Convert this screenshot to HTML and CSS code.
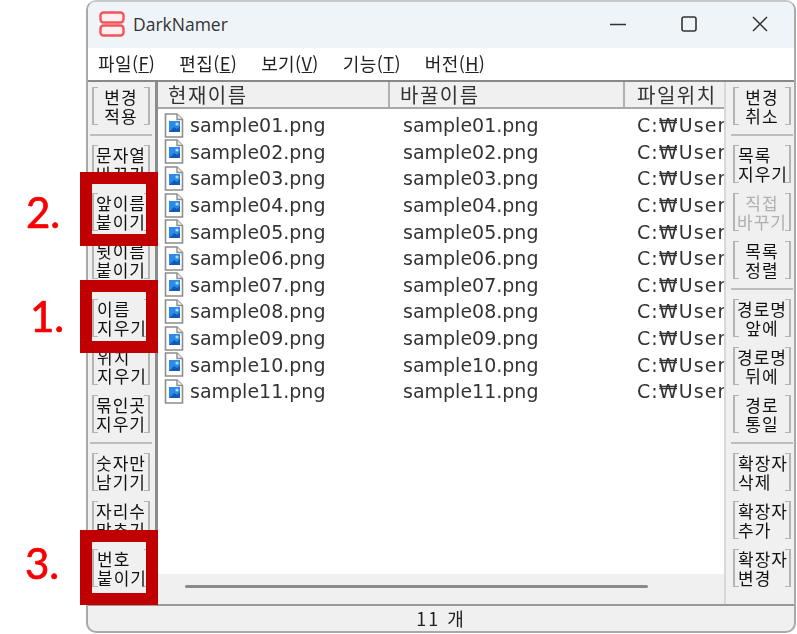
FILE: index.html
```html
<!DOCTYPE html>
<html lang="ko">
<head>
    <meta charset="UTF-8">
    <meta name="viewport" content="width=device-width, initial-scale=1.0">
    <title>DarkNamer</title>
    <link rel="stylesheet" href="styles.css">
</head>
<body>
    <svg class="defs" width="0" height="0">
        <symbol id="fileIcon" viewBox="0 0 20 25">
            <path d="M1.5 1h11.5l5.5 5.5v17.5h-17z" fill="#fff" stroke="#8d8d8d" stroke-width="1.6"/>
            <path d="M13 1v5.5h5.5" fill="#eee" stroke="#8d8d8d" stroke-width="1.4"/>
            <rect x="5" y="8" width="11" height="11" fill="#2a8be8"/>
            <path d="M5 19l5-5 3 2 3-3v6z" fill="#1259b8"/>
            <circle cx="13" cy="11" r="1.6" fill="#a9dbf9"/>
        </symbol>
    </svg>

    <div class="window">
        <div class="titlebar">
            <svg class="app-icon" width="26" height="26" viewBox="0 0 26 26">
                <rect x="1.5" y="1.5" width="23" height="10" rx="3" fill="#fff0f0" stroke="#f4535a" stroke-width="2.4"/>
                <rect x="1.5" y="14.5" width="23" height="10" rx="3" fill="#fff0f0" stroke="#f4535a" stroke-width="2.4"/>
            </svg>
            <span class="app-name">DarkNamer</span>
            <div class="win-controls">
                <svg width="16" height="16" viewBox="0 0 16 16"><path d="M0 8.5h16" stroke="#333" stroke-width="1.6"/></svg>
                <svg width="16" height="16" viewBox="0 0 16 16"><rect x="1" y="1" width="14" height="14" rx="2" fill="none" stroke="#333" stroke-width="1.6"/></svg>
                <svg width="16" height="16" viewBox="0 0 16 16"><path d="M1 1l14 14M15 1L1 15" stroke="#333" stroke-width="1.5"/></svg>
            </div>
        </div>

        <div class="menubar">
            <span>파일(<u>F</u>)</span>
            <span>편집(<u>E</u>)</span>
            <span>보기(<u>V</u>)</span>
            <span>기능(<u>T</u>)</span>
            <span>버전(<u>H</u>)</span>
        </div>

        <div class="workspace">
            <div class="panel panel-left">
                <button class="tool-btn">변경<br>적용</button>
                <div class="sep"></div>
                <button class="tool-btn">문자열<br>바꾸기</button>
                <button class="tool-btn">앞이름<br>붙이기</button>
                <button class="tool-btn">뒷이름<br>붙이기</button>
                <div class="sep"></div>
                <button class="tool-btn align-left">이름<br>지우기</button>
                <button class="tool-btn align-left">위치<br>지우기</button>
                <button class="tool-btn">묶인곳<br>지우기</button>
                <div class="sep"></div>
                <button class="tool-btn">숫자만<br>남기기</button>
                <button class="tool-btn">자리수<br>맞추기</button>
                <button class="tool-btn align-left">번호<br>붙이기</button>
            </div>

            <div class="file-list">
                <div class="list-head">
                    <div class="head-cell">현재이름</div>
                    <div class="head-cell">바꿀이름</div>
                    <div class="head-cell">파일위치</div>
                </div>
                <div class="list-body">
                    <div class="row"><span class="name"><svg class="file-icon"><use href="#fileIcon"/></svg>sample01.png</span><span>sample01.png</span><span class="path">C:₩User</span></div>
                    <div class="row"><span class="name"><svg class="file-icon"><use href="#fileIcon"/></svg>sample02.png</span><span>sample02.png</span><span class="path">C:₩User</span></div>
                    <div class="row"><span class="name"><svg class="file-icon"><use href="#fileIcon"/></svg>sample03.png</span><span>sample03.png</span><span class="path">C:₩User</span></div>
                    <div class="row"><span class="name"><svg class="file-icon"><use href="#fileIcon"/></svg>sample04.png</span><span>sample04.png</span><span class="path">C:₩User</span></div>
                    <div class="row"><span class="name"><svg class="file-icon"><use href="#fileIcon"/></svg>sample05.png</span><span>sample05.png</span><span class="path">C:₩User</span></div>
                    <div class="row"><span class="name"><svg class="file-icon"><use href="#fileIcon"/></svg>sample06.png</span><span>sample06.png</span><span class="path">C:₩User</span></div>
                    <div class="row"><span class="name"><svg class="file-icon"><use href="#fileIcon"/></svg>sample07.png</span><span>sample07.png</span><span class="path">C:₩User</span></div>
                    <div class="row"><span class="name"><svg class="file-icon"><use href="#fileIcon"/></svg>sample08.png</span><span>sample08.png</span><span class="path">C:₩User</span></div>
                    <div class="row"><span class="name"><svg class="file-icon"><use href="#fileIcon"/></svg>sample09.png</span><span>sample09.png</span><span class="path">C:₩User</span></div>
                    <div class="row"><span class="name"><svg class="file-icon"><use href="#fileIcon"/></svg>sample10.png</span><span>sample10.png</span><span class="path">C:₩User</span></div>
                    <div class="row"><span class="name"><svg class="file-icon"><use href="#fileIcon"/></svg>sample11.png</span><span>sample11.png</span><span class="path">C:₩User</span></div>
                </div>
                <div class="scrollbar"><div class="scroll-thumb"></div></div>
            </div>

            <div class="panel panel-right">
                <button class="tool-btn">변경<br>취소</button>
                <div class="sep"></div>
                <button class="tool-btn align-left">목록<br>지우기</button>
                <button class="tool-btn disabled">직접<br>바꾸기</button>
                <button class="tool-btn">목록<br>정렬</button>
                <div class="sep"></div>
                <button class="tool-btn">경로명<br>앞에</button>
                <button class="tool-btn">경로명<br>뒤에</button>
                <button class="tool-btn">경로<br>통일</button>
                <div class="sep"></div>
                <button class="tool-btn align-left">확장자<br>삭제</button>
                <button class="tool-btn align-left">확장자<br>추가</button>
                <button class="tool-btn align-left">확장자<br>변경</button>
            </div>
        </div>

        <div class="statusbar">11 개</div>
    </div>

    <!-- annotations on top of the screenshot -->
    <div class="mark mark-2"></div>
    <div class="mark mark-1"></div>
    <div class="mark mark-3"></div>
    <div class="step step-2">2.</div>
    <div class="step step-1">1.</div>
    <div class="step step-3">3.</div>
</body>
</html>
```

FILE: styles.css
```css
html, body {
    margin: 0;
    height: 634px;
    overflow: hidden;
    background: white;
}
body {
    position: relative;
    font-family: "Noto Sans CJK KR", "Noto Sans", sans-serif;
    color: #222;
}
.defs {
    display: block;
    height: 0;
}
.window {
    box-sizing: border-box;
    width: 710px;
    height: 633px;
    margin-left: 86px;
    display: flex;
    flex-direction: column;
    border: 2px solid #a9a9a9;
    border-top-color: #c8c8c8;
    border-radius: 10px;
    overflow: hidden;
    background: #f0f0f0;
    filter: blur(0.4px);
}
.titlebar {
    flex: none;
    box-sizing: border-box;
    height: 46px;
    display: flex;
    align-items: center;
    padding: 0 0 2px 11px;
    background: #eff4f9;
}
.app-icon {
    margin-right: 8px;
}
.app-name {
    font-family: "Open Sans", sans-serif;
    font-size: 17.5px;
    color: #333;
}
.win-controls {
    margin-left: auto;
    margin-right: 26px;
    display: flex;
    gap: 55px;
}
.menubar {
    flex: none;
    box-sizing: border-box;
    height: 32px;
    display: flex;
    align-items: center;
    gap: 24px;
    padding: 0 0 3px 10px;
    background: white;
    font-size: 18px;
    letter-spacing: 0.4px;
    color: #222;
}
.workspace {
    flex: 1;
    min-height: 0;
    display: flex;
    border-top: 2px solid #888;
    border-bottom: 2px solid #999;
}
.panel {
    flex: none;
    box-sizing: border-box;
    display: flex;
    flex-direction: column;
    gap: 10px;
    padding-top: 5px;
    background: #f0f0f0;
}
.panel-left {
    width: 70px;
    padding-left: 4px;
    border-right: 3px solid #8c8c8c;
}
.panel-right {
    width: 70px;
    padding-left: 7px;
    border-left: 2px solid #d8d8d8;
}
.tool-btn {
    flex: none;
    box-sizing: border-box;
    width: 58px;
    height: 38px;
    padding: 0;
    border: solid #b4b4b4;
    border-width: 0 2px;
    background:
        linear-gradient(#b4b4b4, #b4b4b4) left top / 4px 1px no-repeat,
        linear-gradient(#b4b4b4, #b4b4b4) right top / 4px 1px no-repeat,
        linear-gradient(#b4b4b4, #b4b4b4) left bottom / 4px 1px no-repeat,
        linear-gradient(#b4b4b4, #b4b4b4) right bottom / 4px 1px no-repeat;
    font-family: inherit;
    font-size: 17px;
    line-height: 19px;
    letter-spacing: 1px;
    color: #111;
    white-space: nowrap;
}
.tool-btn.align-left {
    text-align: left;
    padding-left: 3px;
}
.tool-btn.disabled {
    color: #b0b0b0;
}
.sep {
    flex: none;
    height: 2px;
    width: 62px;
    margin: -1px 0 -1px -2px;
    background: #bdbdbd;
}
.file-list {
    flex: 1;
    min-width: 0;
    display: flex;
    flex-direction: column;
    background: white;
}
.list-head {
    flex: none;
    height: 25px;
    display: grid;
    grid-template-columns: 232px 235px 1fr;
    background: #f0f0f0;
    border-bottom: 2px solid #a8a8a8;
    font-size: 20px;
    line-height: 25px;
    letter-spacing: 1.5px;
}
.head-cell {
    padding-left: 10px;
    border-right: 2px solid #b0b0b0;
    box-sizing: border-box;
    color: #333;
    white-space: nowrap;
}
.head-cell:last-child {
    border-right: none;
    padding-left: 12px;
}
.list-body {
    flex: 1;
    min-height: 0;
    padding-top: 3px;
    font-family: "DejaVu Sans", sans-serif;
    font-size: 19px;
    color: #333;
}
.row {
    height: 26.6px;
    display: grid;
    grid-template-columns: 245px 234px 1fr;
    align-items: center;
    white-space: nowrap;
}
.row .path {
    letter-spacing: 1.1px;
}
.name {
    display: flex;
    align-items: center;
    padding-left: 6px;
}
.file-icon {
    flex: none;
    width: 20px;
    height: 25px;
    margin-right: 6px;
}
.scrollbar {
    flex: none;
    height: 30px;
    display: flex;
    align-items: center;
    padding-left: 27px;
    background: #f0f0f0;
}
.scroll-thumb {
    width: 463px;
    height: 3px;
    margin-top: -6px;
    border-radius: 2px;
    background: #8a8a8a;
}
.statusbar {
    flex: none;
    height: 25px;
    text-align: center;
    font-size: 18px;
    line-height: 24px;
    letter-spacing: 2px;
    color: #222;
}
.mark {
    position: absolute;
    left: 80px;
    width: 54px;
    border: 12px solid #c00000;
}
.mark-2 {
    top: 172px;
    height: 50px;
}
.mark-1 {
    top: 280px;
    height: 49px;
}
.mark-3 {
    top: 530px;
    height: 51px;
}
.step {
    position: absolute;
    font-family: Lato, sans-serif;
    font-size: 42px;
    line-height: 50px;
    color: #f80000;
    -webkit-text-stroke: 0.7px #f80000;
}
.step-2 {
    left: 26px;
    top: 187px;
}
.step-1 {
    left: 30px;
    top: 291px;
}
.step-3 {
    left: 25px;
    top: 538px;
}
```
